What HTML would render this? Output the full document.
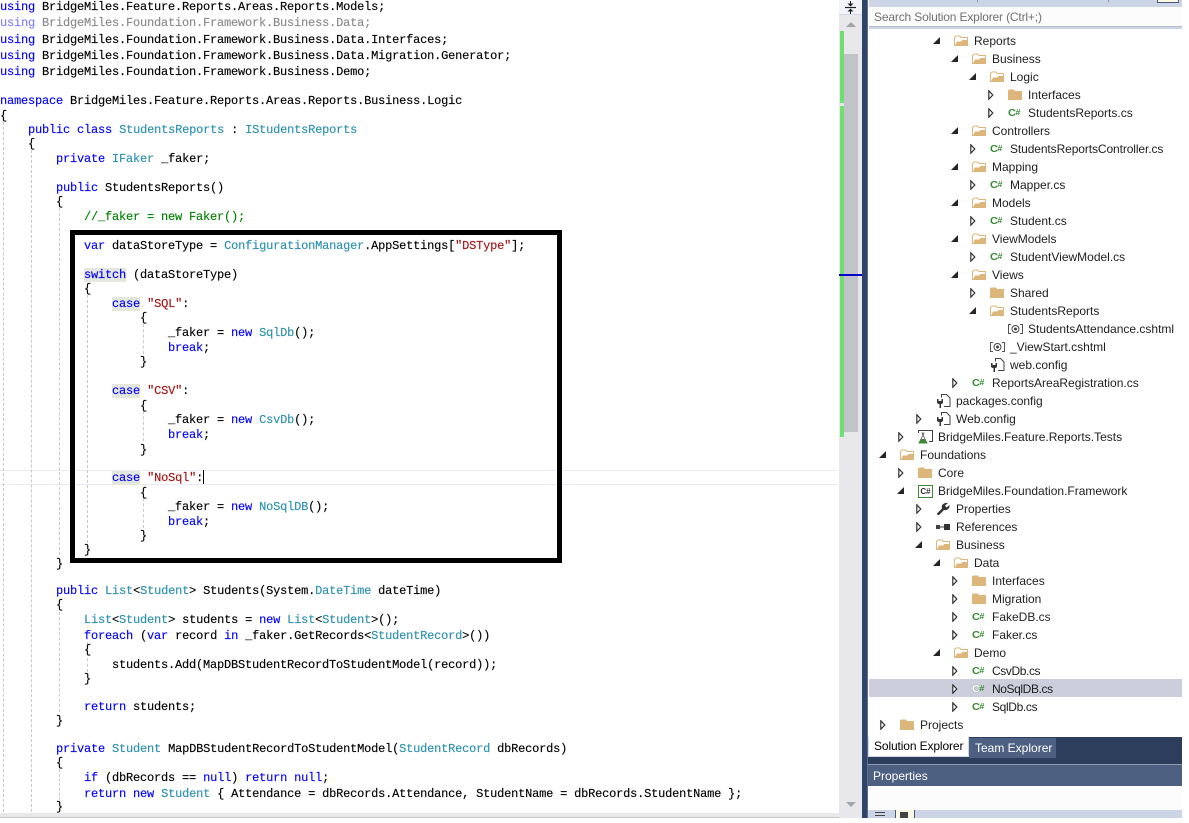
<!DOCTYPE html>
<html><head><meta charset="utf-8"><style>
html,body{margin:0;padding:0;background:#fff;width:1189px;height:823px;overflow:hidden;position:relative}
.a{position:absolute}
pre{position:absolute;margin:1px 0 0;font:12px/14px "Liberation Mono",monospace;letter-spacing:-.2px;color:#000;white-space:pre;left:0;-webkit-text-stroke:.15px}
b{font-weight:normal;color:#00f}i{font-style:normal;color:#2b91af}s{text-decoration:none;color:#a31515}
u{text-decoration:none;color:#00f;background:#e4e8dc}
.f,.f b{color:#8a8a8a}.f b{color:#8080ff}
.g{position:absolute;width:0;border-left:1px dashed #c8c8c8}
.r{position:absolute;height:18px;font:12px/18px "Liberation Sans",sans-serif;color:#1e1e1e;white-space:nowrap}
.r svg{position:absolute}
.cs{position:absolute;left:-20px;top:0;font:bold 11px/18px "Liberation Sans",sans-serif;color:#388a34;letter-spacing:-.6px;transform:scale(1,.95)}
.cs em{font-style:normal;font-size:9px;position:relative;top:-1px}
</style></head><body>
<svg width="0" height="0" style="position:absolute"><defs>
<symbol id="o" viewBox="0 0 7 7"><path d="M7 0V7H0Z" fill="#262626"/></symbol>
<symbol id="c" viewBox="0 0 6 10"><path d="M.8 .8L4.800 5L.8 9.200Z" fill="#fff" stroke="#333" stroke-width="1.200"/></symbol>
<symbol id="fo" viewBox="0 0 14 11"><path d="M.5 10.500V2.500L2 1H6L7 2.500H13.500V10.500Z" fill="#fff" stroke="#dcb67a"/><path d="M1 10.500L3 6.500H7L8.500 5H13.500V10.500Z" fill="#dcb67a"/></symbol>
<symbol id="fc" viewBox="0 0 14 11"><path d="M0 11V1.500L1 .5H6L7 2H14V11Z" fill="#dcb67a"/></symbol>
<symbol id="cfg" viewBox="0 0 15 14"><path d="M5.500 3.500V.5H10.500L14 4V12.500H8" fill="#fff" stroke="#424242"/><path d="M1 5H2.500V7H5.500V5H7V8.500Q7 9.800 5 10V14H3.500V10Q1 9.800 1 8.500Z" fill="#333"/></symbol>
<symbol id="at" viewBox="0 0 15 10"><path d="M3 .5H.5V9.500H3M12 .5H14.500V9.500H12" fill="none" stroke="#555"/><circle cx="7.500" cy="5" r="3.500" fill="none" stroke="#444"/><circle cx="7.500" cy="5" r="1.500" fill="#444"/></symbol>
</defs></svg>

<!-- current line -->
<div class="a" style="left:0;top:470px;width:838px;height:13px;border:solid #eaeaf2;border-width:1.500px 0"></div>

<!-- guides -->
<div class="g" style="left:3px;top:122px;height:690px"></div>
<div class="g" style="left:31px;top:150px;height:662px"></div>
<div class="g" style="left:59px;top:208px;height:347px"></div>
<div class="g" style="left:59px;top:612px;height:100px"></div>
<div class="g" style="left:59px;top:769px;height:36px"></div>
<div class="g" style="left:87px;top:295px;height:248px"></div>
<div class="g" style="left:87px;top:642px;height:30px"></div>
<div class="g" style="left:143px;top:324px;height:30px"></div>
<div class="g" style="left:143px;top:411px;height:30px"></div>
<div class="g" style="left:143px;top:498px;height:30px"></div>

<!-- code -->
<pre style="top:-1px"><b>using</b> BridgeMiles.Feature.Reports.Areas.Reports.Models;</pre>
<pre class="f" style="top:15px"><b>using</b> BridgeMiles.Foundation.Framework.Business.Data;</pre>
<pre style="top:32px"><b>using</b> BridgeMiles.Foundation.Framework.Business.Data.Interfaces;</pre>
<pre style="top:48px"><b>using</b> BridgeMiles.Foundation.Framework.Business.Data.Migration.Generator;</pre>
<pre style="top:64px"><b>using</b> BridgeMiles.Foundation.Framework.Business.Demo;</pre>
<pre style="top:93px"><b>namespace</b> BridgeMiles.Feature.Reports.Areas.Reports.Business.Logic</pre>
<pre style="top:108px">{</pre>
<pre style="top:122px">    <b>public</b> <b>class</b> <i>StudentsReports</i> : <i>IStudentsReports</i></pre>
<pre style="top:136px">    {</pre>
<pre style="top:151px">        <b>private</b> <i>IFaker</i> _faker;</pre>
<pre style="top:180px">        <b>public</b> StudentsReports()</pre>
<pre style="top:194px">        {</pre>
<pre style="top:209px;color:#008000">            //_faker = new Faker();</pre>
<pre style="top:238px">            <b>var</b> dataStoreType = <i>ConfigurationManager</i>.AppSettings[<s>"DSType"</s>];</pre>
<pre style="top:267px">            <u>switch</u> (dataStoreType)</pre>
<pre style="top:281px">            {</pre>
<pre style="top:296px">                <u>case</u> <s>"SQL"</s>:</pre>
<pre style="top:310px">                    {</pre>
<pre style="top:325px">                        _faker = <b>new</b> <i>SqlDb</i>();</pre>
<pre style="top:340px">                        <b>break</b>;</pre>
<pre style="top:354px">                    }</pre>
<pre style="top:383px">                <u>case</u> <s>"CSV"</s>:</pre>
<pre style="top:398px">                    {</pre>
<pre style="top:412px">                        _faker = <b>new</b> <i>CsvDb</i>();</pre>
<pre style="top:427px">                        <b>break</b>;</pre>
<pre style="top:442px">                    }</pre>
<pre style="top:470px">                <u>case</u> <s>"NoSql"</s>:</pre>
<pre style="top:485px">                    {</pre>
<pre style="top:499px">                        _faker = <b>new</b> <i>NoSqlDB</i>();</pre>
<pre style="top:514px">                        <b>break</b>;</pre>
<pre style="top:528px">                    }</pre>
<pre style="top:542px">            }</pre>
<pre style="top:556px">        }</pre>
<pre style="top:583px">        <b>public</b> <i>List</i>&lt;<i>Student</i>&gt; Students(System.<i>DateTime</i> dateTime)</pre>
<pre style="top:597px">        {</pre>
<pre style="top:612px">            <i>List</i>&lt;<i>Student</i>&gt; students = <b>new</b> <i>List</i>&lt;<i>Student</i>&gt;();</pre>
<pre style="top:628px">            <b>foreach</b> (<b>var</b> record <b>in</b> _faker.GetRecords&lt;<i>StudentRecord</i>&gt;())</pre>
<pre style="top:642px">            {</pre>
<pre style="top:657px">                students.Add(MapDBStudentRecordToStudentModel(record));</pre>
<pre style="top:671px">            }</pre>
<pre style="top:699px">            <b>return</b> students;</pre>
<pre style="top:713px">        }</pre>
<pre style="top:741px">        <b>private</b> <i>Student</i> MapDBStudentRecordToStudentModel(<i>StudentRecord</i> dbRecords)</pre>
<pre style="top:755px">        {</pre>
<pre style="top:770px">            <b>if</b> (dbRecords == <b>null</b>) <b>return</b> <b>null</b>;</pre>
<pre style="top:786px">            <b>return</b> <b>new</b> <i>Student</i> { Attendance = dbRecords.Attendance, StudentName = dbRecords.StudentName };</pre>
<pre style="top:799px">        }</pre>

<div class="a" style="left:203px;top:470px;width:1px;height:14px;background:#000"></div>
<!-- black box -->
<div class="a" style="left:70px;top:230px;width:482px;height:323px;border:5px solid #000"></div>

<!-- bottom editor scrollbar -->
<div class="a" style="left:0;top:813px;width:839px;height:5px;background:#e8e8ec;border-bottom:1px solid #c8c8cc;box-sizing:border-box"></div>

<!-- editor vertical scrollbar -->
<div class="a" style="left:839px;top:0;width:23px;height:818px;background:#e8e8ec"></div>
<div class="a" style="left:839px;top:0;width:23px;height:15px;background:#f2f4f9;border-bottom:1px solid #d5d9e6;box-sizing:border-box"></div>
<svg class="a" style="left:844px;top:1px" width="13" height="13" viewBox="0 0 13 13"><path d="M1 6.500H12" stroke="#222" stroke-width="1.200" fill="none"/><path d="M6.500 0V3M6.500 10V13" stroke="#222" fill="none"/><path d="M3.500 2.500L6.500 5.500L9.500 2.500ZM3.500 10.500L6.500 7.500L9.500 10.500Z" fill="#222"/></svg>
<svg class="a" style="left:846px;top:21px" width="10" height="6"><path d="M0 6L5 1L10 6Z" fill="#a3a3ac"/></svg>
<div class="a" style="left:844px;top:54px;width:14px;height:378px;background:#c2c3c9"></div>
<div class="a" style="left:840px;top:31px;width:4px;height:72px;background:#6ee06e"></div>
<div class="a" style="left:840px;top:106px;width:4px;height:331px;background:#6ee06e"></div>
<div class="a" style="left:839px;top:274px;width:23px;height:1.500px;background:#0000d0"></div>
<svg class="a" style="left:846px;top:802px" width="10" height="6"><path d="M0 0L5 5L10 0Z" fill="#a3a3ac"/></svg>

<!-- dark strip -->
<div class="a" style="left:862px;top:0;width:6px;height:818px;background:#2f4468;border-right:1px solid #5a6f92;box-sizing:border-box"></div>

<!-- SE top -->
<div class="a" style="left:869px;top:0;width:313px;height:7px;background:#ccd5e5"></div>
<div class="a" style="left:977px;top:0;width:1px;height:2px;background:#8a94a8"></div>
<div class="a" style="left:1108px;top:0;width:1px;height:2px;background:#8a94a8"></div>
<div class="a" style="left:1157px;top:0;width:20px;height:2px;background:#fdf8e4;border:1px solid #46587c;border-top:0"></div>
<div class="a" style="left:869px;top:7px;width:313px;height:19px;background:#fcfcfc;font:12px/20px 'Liberation Sans',sans-serif;letter-spacing:-.16px;color:#717171;padding-left:5px;box-sizing:border-box">Search Solution Explorer (Ctrl+;)</div>
<div class="a" style="left:869px;top:26px;width:313px;height:3px;background:#ccd5e5;border-top:1px solid #b4bdcd;box-sizing:border-box"></div>

<!-- selected row -->
<div class="a" style="left:869px;top:679px;width:313px;height:18px;background:#ccceDB"></div>

<!-- tree -->
<div class="r" style="left:974px;top:32px"><svg style="left:-41px;top:5px" width="7" height="7"><use href="#o"/></svg><svg style="left:-20px;top:3px" width="14" height="11"><use href="#fo"/></svg>Reports</div>
<div class="r" style="left:992px;top:50px"><svg style="left:-41px;top:5px" width="7" height="7"><use href="#o"/></svg><svg style="left:-20px;top:3px" width="14" height="11"><use href="#fo"/></svg>Business</div>
<div class="r" style="left:1010px;top:68px"><svg style="left:-41px;top:5px" width="7" height="7"><use href="#o"/></svg><svg style="left:-20px;top:3px" width="14" height="11"><use href="#fo"/></svg>Logic</div>
<div class="r" style="left:1028px;top:86px"><svg style="left:-40px;top:4px" width="6" height="10"><use href="#c"/></svg><svg style="left:-20px;top:3px" width="14" height="11"><use href="#fc"/></svg>Interfaces</div>
<div class="r" style="left:1028px;top:104px"><svg style="left:-40px;top:4px" width="6" height="10"><use href="#c"/></svg><span class="cs">C<em>#</em></span>StudentsReports.cs</div>
<div class="r" style="left:992px;top:122px"><svg style="left:-41px;top:5px" width="7" height="7"><use href="#o"/></svg><svg style="left:-20px;top:3px" width="14" height="11"><use href="#fo"/></svg>Controllers</div>
<div class="r" style="left:1010px;top:140px;letter-spacing:-.1px"><svg style="left:-40px;top:4px" width="6" height="10"><use href="#c"/></svg><span class="cs">C<em>#</em></span>StudentsReportsController.cs</div>
<div class="r" style="left:992px;top:158px"><svg style="left:-41px;top:5px" width="7" height="7"><use href="#o"/></svg><svg style="left:-20px;top:3px" width="14" height="11"><use href="#fo"/></svg>Mapping</div>
<div class="r" style="left:1010px;top:176px"><svg style="left:-40px;top:4px" width="6" height="10"><use href="#c"/></svg><span class="cs">C<em>#</em></span>Mapper.cs</div>
<div class="r" style="left:992px;top:194px"><svg style="left:-41px;top:5px" width="7" height="7"><use href="#o"/></svg><svg style="left:-20px;top:3px" width="14" height="11"><use href="#fo"/></svg>Models</div>
<div class="r" style="left:1010px;top:212px"><svg style="left:-40px;top:4px" width="6" height="10"><use href="#c"/></svg><span class="cs">C<em>#</em></span>Student.cs</div>
<div class="r" style="left:992px;top:230px"><svg style="left:-41px;top:5px" width="7" height="7"><use href="#o"/></svg><svg style="left:-20px;top:3px" width="14" height="11"><use href="#fo"/></svg>ViewModels</div>
<div class="r" style="left:1010px;top:248px"><svg style="left:-40px;top:4px" width="6" height="10"><use href="#c"/></svg><span class="cs">C<em>#</em></span>StudentViewModel.cs</div>
<div class="r" style="left:992px;top:266px"><svg style="left:-41px;top:5px" width="7" height="7"><use href="#o"/></svg><svg style="left:-20px;top:3px" width="14" height="11"><use href="#fo"/></svg>Views</div>
<div class="r" style="left:1010px;top:284px"><svg style="left:-40px;top:4px" width="6" height="10"><use href="#c"/></svg><svg style="left:-20px;top:3px" width="14" height="11"><use href="#fc"/></svg>Shared</div>
<div class="r" style="left:1010px;top:302px"><svg style="left:-41px;top:5px" width="7" height="7"><use href="#o"/></svg><svg style="left:-20px;top:3px" width="14" height="11"><use href="#fo"/></svg>StudentsReports</div>
<div class="r" style="left:1028px;top:320px"><svg style="left:-20px;top:4px" width="15" height="10"><use href="#at"/></svg>StudentsAttendance.cshtml</div>
<div class="r" style="left:1010px;top:338px"><svg style="left:-20px;top:4px" width="15" height="10"><use href="#at"/></svg>_ViewStart.cshtml</div>
<div class="r" style="left:1010px;top:356px"><svg style="left:-20px;top:2px" width="15" height="14"><use href="#cfg"/></svg>web.config</div>
<div class="r" style="left:992px;top:374px"><svg style="left:-40px;top:4px" width="6" height="10"><use href="#c"/></svg><span class="cs">C<em>#</em></span>ReportsAreaRegistration.cs</div>
<div class="r" style="left:956px;top:392px"><svg style="left:-20px;top:2px" width="15" height="14"><use href="#cfg"/></svg>packages.config</div>
<div class="r" style="left:956px;top:410px"><svg style="left:-40px;top:4px" width="6" height="10"><use href="#c"/></svg><svg style="left:-20px;top:2px" width="15" height="14"><use href="#cfg"/></svg>Web.config</div>
<div class="r" style="left:938px;top:428px"><svg style="left:-40px;top:4px" width="6" height="10"><use href="#c"/></svg><svg style="left:-20px;top:2px" width="15" height="14" viewBox="0 0 15 14"><path d="M.5 3V.5H14.500V11.500H11" fill="none" stroke="#424242"/><path d="M3.500 3H6.500M4.300 3V6.500L1 13H9L5.700 6.500V3" fill="#fff" stroke="#555" stroke-width=".8"/><path d="M3 9H7L9.500 13.500H.5Z" fill="#388a34"/></svg>BridgeMiles.Feature.Reports.Tests</div>
<div class="r" style="left:920px;top:446px"><svg style="left:-41px;top:5px" width="7" height="7"><use href="#o"/></svg><svg style="left:-20px;top:3px" width="14" height="11"><use href="#fo"/></svg>Foundations</div>
<div class="r" style="left:938px;top:464px"><svg style="left:-40px;top:4px" width="6" height="10"><use href="#c"/></svg><svg style="left:-20px;top:3px" width="14" height="11"><use href="#fc"/></svg>Core</div>
<div class="r" style="left:938px;top:482px"><svg style="left:-41px;top:5px" width="7" height="7"><use href="#o"/></svg><span class="a" style="left:-20px;top:3px;width:13px;height:11px;border:1px solid #388a34;font:bold 8px/11px 'Liberation Sans',sans-serif;color:#333;text-align:center">C#</span>BridgeMiles.Foundation.Framework</div>
<div class="r" style="left:956px;top:500px"><svg style="left:-40px;top:4px" width="6" height="10"><use href="#c"/></svg><svg style="left:-20px;top:2px" width="14" height="14" viewBox="0 0 14 14"><path d="M1 11.500L6 6.500Q5 3 8 1.500Q10 .5 12 1L9 3.500L10.500 5.500L13.500 3Q14 6 11.500 7.500Q10 8.500 8 8L3 13Q1.500 13.500 1 11.500Z" fill="#333"/></svg>Properties</div>
<div class="r" style="left:956px;top:518px"><svg style="left:-40px;top:4px" width="6" height="10"><use href="#c"/></svg><svg style="left:-20px;top:5px" width="15" height="8" viewBox="0 0 15 8"><rect y="2" width="4" height="4" fill="#424242"/><rect x="4" y="3.500" width="4" height="1" fill="#424242"/><rect x="8" y="1" width="6" height="6" fill="#333"/></svg>References</div>
<div class="r" style="left:956px;top:536px"><svg style="left:-41px;top:5px" width="7" height="7"><use href="#o"/></svg><svg style="left:-20px;top:3px" width="14" height="11"><use href="#fo"/></svg>Business</div>
<div class="r" style="left:974px;top:554px"><svg style="left:-41px;top:5px" width="7" height="7"><use href="#o"/></svg><svg style="left:-20px;top:3px" width="14" height="11"><use href="#fo"/></svg>Data</div>
<div class="r" style="left:992px;top:572px"><svg style="left:-40px;top:4px" width="6" height="10"><use href="#c"/></svg><svg style="left:-20px;top:3px" width="14" height="11"><use href="#fc"/></svg>Interfaces</div>
<div class="r" style="left:992px;top:590px"><svg style="left:-40px;top:4px" width="6" height="10"><use href="#c"/></svg><svg style="left:-20px;top:3px" width="14" height="11"><use href="#fc"/></svg>Migration</div>
<div class="r" style="left:992px;top:608px"><svg style="left:-40px;top:4px" width="6" height="10"><use href="#c"/></svg><span class="cs">C<em>#</em></span>FakeDB.cs</div>
<div class="r" style="left:992px;top:626px"><svg style="left:-40px;top:4px" width="6" height="10"><use href="#c"/></svg><span class="cs">C<em>#</em></span>Faker.cs</div>
<div class="r" style="left:974px;top:644px"><svg style="left:-41px;top:5px" width="7" height="7"><use href="#o"/></svg><svg style="left:-20px;top:3px" width="14" height="11"><use href="#fo"/></svg>Demo</div>
<div class="r" style="left:992px;top:662px;letter-spacing:-.4px"><svg style="left:-40px;top:4px" width="6" height="10"><use href="#c"/></svg><span class="cs">C<em>#</em></span>CsvDb.cs</div>
<div class="r" style="left:992px;top:680px;letter-spacing:-.4px"><svg style="left:-40px;top:4px" width="6" height="10"><use href="#c"/></svg><span class="cs" style="color:#fff;text-shadow:0 0 1px #388a34">C<em style="color:#388a34;text-shadow:none">#</em></span>NoSqlDB.cs</div>
<div class="r" style="left:992px;top:698px;letter-spacing:-.35px"><svg style="left:-40px;top:4px" width="6" height="10"><use href="#c"/></svg><span class="cs">C<em>#</em></span>SqlDb.cs</div>
<div class="r" style="left:920px;top:716px"><svg style="left:-40px;top:4px" width="6" height="10"><use href="#c"/></svg><svg style="left:-20px;top:3px" width="14" height="11"><use href="#fc"/></svg>Projects</div>

<!-- bottom panels -->
<div class="a" style="left:868px;top:737px;width:314px;height:27px;background:#2d3e5c"></div>
<div class="a" style="left:868px;top:737px;width:101px;height:20px;background:#fff;font:12px/18px 'Liberation Sans',sans-serif;letter-spacing:-.12px;color:#000;padding-left:5px;box-sizing:border-box;border:solid #cfd6e5;border-width:0 1px 1px 1px">Solution Explorer</div>
<div class="a" style="left:969px;top:738px;width:87px;height:20px;background:#4d6082;font:12px/20px 'Liberation Sans',sans-serif;color:#fff;padding-left:6px;box-sizing:border-box">Team Explorer</div>
<div class="a" style="left:868px;top:764px;width:314px;height:22px;background:#4d6082;border-top:1px solid #8e9bb4;box-sizing:border-box;font:12px/23px 'Liberation Sans',sans-serif;color:#fff;padding-left:5px">Properties</div>
<div class="a" style="left:868px;top:786px;width:314px;height:24px;background:#fcfcfc"></div>
<div class="a" style="left:868px;top:810px;width:314px;height:8px;background:#ccd5e5;overflow:hidden">
<div class="a" style="left:7px;top:2px;width:10px;height:1px;background:#444"></div>
<div class="a" style="left:7px;top:5px;width:10px;height:1px;background:#444"></div>
<div class="a" style="left:27px;top:-1px;width:20px;height:12px;background:#fdf8e4;border:1px solid #46587c;box-sizing:border-box"></div>
<div class="a" style="left:32px;top:2px;width:8px;height:6px;background:#444"></div>
</div>
</body></html>
